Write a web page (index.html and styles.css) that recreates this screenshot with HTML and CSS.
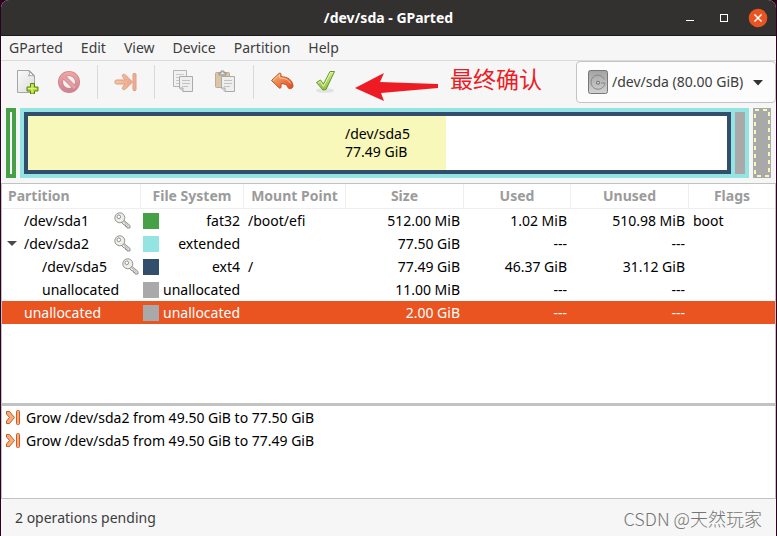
FILE: index.html
```html
<!DOCTYPE html>
<html lang="en">
<head>
  <meta charset="UTF-8">
  <meta name="viewport" content="width=device-width, initial-scale=1.0">
  <title>/dev/sda - GParted</title>
  <link rel="stylesheet" href="styles.css">
</head>
<body>
  <!-- Shared icons and gradients -->
  <svg class="defs" width="0" height="0" aria-hidden="true">
    <defs>
      <linearGradient id="paper" x1="0" y1="0" x2="1" y2="1">
        <stop offset="0" stop-color="#fafafa"/>
        <stop offset="1" stop-color="#dcdcdc"/>
      </linearGradient>
      <linearGradient id="orange" x1="0" y1="0" x2="1" y2="1">
        <stop offset="0" stop-color="#f7b878"/>
        <stop offset="1" stop-color="#e2461d"/>
      </linearGradient>
      <linearGradient id="peach" x1="0" y1="0" x2="1" y2="0">
        <stop offset="0" stop-color="#f3cba6"/>
        <stop offset="1" stop-color="#f0a28c"/>
      </linearGradient>
      <linearGradient id="rose" x1="0" y1="0" x2="0" y2="1">
        <stop offset="0" stop-color="#f0a3a3"/>
        <stop offset="1" stop-color="#cf8397"/>
      </linearGradient>
      <linearGradient id="green" x1="0" y1="0" x2="0" y2="1">
        <stop offset="0" stop-color="#d3ea86"/>
        <stop offset="1" stop-color="#8fc13e"/>
      </linearGradient>
      <linearGradient id="metal" x1="0" y1="0" x2="0" y2="1">
        <stop offset="0" stop-color="#a2a2a2"/>
        <stop offset="1" stop-color="#d2d2d2"/>
      </linearGradient>
    </defs>
    <symbol id="key" viewBox="0 0 17 17">
      <path d="M9 7.500l7 6v2.500h-3v-1.500h-1.500V13H10L7 10" fill="#e4e4e0" stroke="#92928e" stroke-linejoin="round"/>
      <circle cx="5.800" cy="5.800" r="5" fill="#ededea" stroke="#92928e"/>
      <circle cx="4.800" cy="4.800" r="1.800" fill="#fff" stroke="#92928e"/>
      <path d="M9 9l5.500 5" stroke="#b5b5b0"/>
    </symbol>
    <symbol id="grow" viewBox="0 0 16 16">
      <path d="M1.500 1.500h3L9.500 7.500l-5 6h-3v-2.500l3-3.500-3-3.500z" fill="#f2ae7c" stroke="#cf5a26" stroke-linejoin="round"/>
      <rect x="11.500" y=".500" width="3" height="14" rx="1" fill="#f2ae7c" stroke="#cf5a26"/>
    </symbol>
  </svg>

  <div class="window">
    <!-- Title bar -->
    <header class="titlebar">
      <h1>/dev/sda - GParted</h1>
      <div class="window-buttons">
        <button type="button" aria-label="Minimize"><svg width="20" height="20"><path d="M6 12.500h8" stroke="#fff"/></svg></button>
        <button type="button" aria-label="Maximize"><svg width="20" height="20"><rect x="6.500" y="6.500" width="7" height="7" fill="none" stroke="#fff"/></svg></button>
        <button type="button" aria-label="Close"><svg width="20" height="20"><circle cx="10" cy="10" r="9.300" fill="#e95420"/><path d="M6.500 6.500l7 7M13.500 6.500l-7 7" stroke="#fff" stroke-width="1.500"/></svg></button>
      </div>
    </header>

    <!-- Menu bar -->
    <nav class="menubar">
      <button type="button">GParted</button>
      <button type="button">Edit</button>
      <button type="button">View</button>
      <button type="button">Device</button>
      <button type="button">Partition</button>
      <button type="button">Help</button>
    </nav>

    <!-- Toolbar -->
    <div class="toolbar">
      <button type="button" aria-label="New">
        <svg width="24" height="24" viewBox="0 0 24 24">
          <path d="M2.500.500h12l5 5v17h-17z" fill="url(#paper)" stroke="#a5a5a5"/>
          <path d="M14 1c1 1.500.500 4-.500 5 2-.700 4-.500 5.500 0z" fill="#fff" stroke="#a5a5a5"/>
          <path d="M15.500 13.500h4v3.500h3.500v4h-3.500v3h-4v-3H12v-4h3.500z" fill="#b8dc35" stroke="#508a08"/>
          <path d="M17 14.500v8M13 18.500h8" stroke="#e2f295"/>
        </svg>
      </button>
      <button type="button" aria-label="Delete" disabled>
        <svg width="24" height="24" viewBox="0 0 24 24">
          <circle cx="12" cy="12" r="8.500" fill="#f7f2f2" stroke="#cf8585" stroke-width="5"/>
          <path d="M6 6l12 12" stroke="#cf8585" stroke-width="4.500"/>
          <circle cx="12" cy="12" r="8.500" fill="none" stroke="url(#rose)" stroke-width="3.500"/>
          <path d="M6 6l12 12" stroke="#e4a0a4" stroke-width="3"/>
        </svg>
      </button>
      <span class="separator"></span>
      <button type="button" aria-label="Resize/Move" disabled>
        <svg width="24" height="24" viewBox="0 0 24 24">
          <path d="M2 10h9L8.500 6.500c-1-2 1.500-3 3-1.500l7 7-7 7c-1.500 1.500-4 .500-3-1.500L11 14H2c-1.500 0-1.500-4 0-4z" fill="url(#peach)" stroke="#df9d7f"/>
          <rect x="19" y="3.500" width="3" height="17" rx="1" fill="#f0af94" stroke="#df9d7f"/>
        </svg>
      </button>
      <span class="separator"></span>
      <button type="button" aria-label="Copy" disabled>
        <svg width="24" height="24" viewBox="0 0 24 24">
          <path d="M2.500.500h13v16h-13z" fill="#f1f1f1" stroke="#b4b4b4"/>
          <path d="M5 4.500h8M5 7.500h6M5 10.500h4M5 13.500h3" stroke="#c8c8c8"/>
          <path d="M8.500 6.500h13v15H12l-3.500-3.500z" fill="#eee" stroke="#aaa"/>
          <path d="M11 10.500h8M11 13.500h8M11 16.500h6" stroke="#c2c2c2"/>
          <path d="M8.500 18H12v3.500" fill="#ddd" stroke="#aaa"/>
        </svg>
      </button>
      <button type="button" aria-label="Paste" disabled>
        <svg width="24" height="24" viewBox="0 0 24 24">
          <rect x="2.500" y="2.500" width="14" height="15" rx="1" fill="#dac5a9" stroke="#c2aa8c"/>
          <path d="M6 5V3h2V1h3v2h2v2z" fill="#ddd" stroke="#8f8f8f"/>
          <path d="M8.500 6.500h13v15H12l-3.500-3.500z" fill="#eee" stroke="#aaa"/>
          <path d="M11 10.500h8M11 13.500h8M11 16.500h6" stroke="#c2c2c2"/>
          <path d="M8.500 18H12v3.500" fill="#ddd" stroke="#aaa"/>
        </svg>
      </button>
      <span class="separator"></span>
      <button type="button" aria-label="Undo">
        <svg width="24" height="24" viewBox="0 0 24 24">
          <path d="M1.500 10.500L9 3.500c1-.700 2-.300 2 .700v2.500c6 0 11.500 3 12 9 0 3.500-4.500 4-5.500 1-.500-2-2.500-3-6.500-3v3c0 1.500-1 2-2 1z" fill="url(#orange)" stroke="#c35124" stroke-linejoin="round"/>
          <path d="M3 10.500l6.500-6V8c5 0 9 1.500 11 5.500" fill="none" stroke="#f9ce9e"/>
        </svg>
      </button>
      <button type="button" aria-label="Apply">
        <svg width="24" height="24" viewBox="0 0 24 24">
          <ellipse cx="13" cy="20.500" rx="9" ry="2.300" fill="#e2e2e2"/>
          <path d="M4.500 12.500l4-2.500 3 4L18 1.500h4.500L14 19.500l-3 .500z" fill="url(#green)" stroke="#64972c" stroke-linejoin="round"/>
          <path d="M6 13l2.300-1.500 3.200 5L18.500 2.500h2.500" fill="none" stroke="#e6f4b3"/>
        </svg>
      </button>
      <div class="device">
        <svg class="disk" width="20" height="24" viewBox="0 0 20 24">
          <rect x=".500" y=".500" width="19" height="23" rx="2" fill="url(#metal)" stroke="#777"/>
          <path d="M16.500 9.500A7 7 0 1 0 17 13H13" fill="none" stroke="#858585"/>
          <circle cx="10" cy="12.700" r="2" fill="#777"/>
          <circle cx="10" cy="12.700" r=".800" fill="#fff"/>
        </svg>
        <select aria-label="Device">
          <option>/dev/sda (80.00 GiB)</option>
        </select>
        <svg class="caret" width="10" height="6"><path d="M0 0h10L5 5.500z" fill="#333"/></svg>
      </div>

      <div class="note">
        <svg width="84" height="28" viewBox="0 0 84 28"><path d="M0 15L29 0l-4 9 58 2v4l-57 5 3 8z" fill="#ed1c24"/></svg>
        <span lang="zh">最终确认</span>
      </div>
    </div>

    <!-- Disk map -->
    <div class="disk-map">
      <div class="part fat32"></div>
      <div class="part extended">
        <div class="part ext4">
          <div class="used" style="width: 59.8%"></div>
          <div class="part-label">/dev/sda5<br>77.49 GiB</div>
        </div>
        <div class="free"></div>
      </div>
      <div class="part unallocated"><svg width="100%" height="100%"><rect x="2" y="2" width="14" height="66" fill="none" stroke="#f8f8ba" stroke-width="2" stroke-dasharray="4 4"/></svg></div>
    </div>

    <!-- Partition list -->
    <div class="partitions">
      <table>
        <colgroup>
          <col class="col-partition"><col class="col-fs"><col class="col-mount"><col class="col-size"><col class="col-used"><col class="col-unused"><col>
        </colgroup>
        <thead>
          <tr>
            <th class="first">Partition</th><th>File System</th><th>Mount Point</th><th>Size</th><th>Used</th><th>Unused</th><th>Flags</th>
          </tr>
        </thead>
        <tbody>
          <tr>
            <td><div class="name"><span>/dev/sda1</span><svg width="17" height="17"><use href="#key"/></svg></div></td>
            <td><div class="fs"><i class="swatch fat32"></i>fat32</div></td>
            <td>/boot/efi</td><td class="num">512.00 MiB</td><td class="num">1.02 MiB</td><td class="num">510.98 MiB</td><td>boot</td>
          </tr>
          <tr>
            <td><div class="name open"><span>/dev/sda2</span><svg width="17" height="17"><use href="#key"/></svg></div></td>
            <td><div class="fs"><i class="swatch extended"></i>extended</div></td>
            <td></td><td class="num">77.50 GiB</td><td class="num">---</td><td class="num">---</td><td></td>
          </tr>
          <tr>
            <td><div class="name child"><span>/dev/sda5</span><svg width="17" height="17"><use href="#key"/></svg></div></td>
            <td><div class="fs"><i class="swatch ext4"></i>ext4</div></td>
            <td>/</td><td class="num">77.49 GiB</td><td class="num">46.37 GiB</td><td class="num">31.12 GiB</td><td></td>
          </tr>
          <tr>
            <td><div class="name child"><span>unallocated</span></div></td>
            <td><div class="fs"><i class="swatch unallocated"></i>unallocated</div></td>
            <td></td><td class="num">11.00 MiB</td><td class="num">---</td><td class="num">---</td><td></td>
          </tr>
          <tr class="selected">
            <td><div class="name"><span>unallocated</span></div></td>
            <td><div class="fs"><i class="swatch unallocated"></i>unallocated</div></td>
            <td></td><td class="num">2.00 GiB</td><td class="num">---</td><td class="num">---</td><td></td>
          </tr>
        </tbody>
      </table>
    </div>

    <!-- Pending operations -->
    <ul class="operations">
      <li><svg width="16" height="16"><use href="#grow"/></svg>Grow /dev/sda2 from 49.50 GiB to 77.50 GiB</li>
      <li><svg width="16" height="16"><use href="#grow"/></svg>Grow /dev/sda5 from 49.50 GiB to 77.49 GiB</li>
    </ul>

    <footer class="statusbar">
      <span>2 operations pending</span>
      <span class="watermark" lang="zh">CSDN @天然玩家</span>
    </footer>
  </div>
</body>
</html>
```
FILE: styles.css
```css
* {
  box-sizing: border-box;
}
body {
  margin: 0;
  padding: 0 1px;
  background-color: #2c001e;
  font-family: "Noto Sans", "Open Sans", sans-serif;
  font-size: 14px;
  line-height: 18px;
  color: #000;
}
button, select {
  font: inherit;
  color: #3d3d3d;
  border: none;
  background: none;
  margin: 0;
  padding: 0;
}
svg {
  display: block;
  flex: none;
}
.defs {
  position: absolute;
}
.window {
  display: flex;
  flex-direction: column;
  min-height: 100vh;
  background-color: #f6f6f6;
  border-radius: 8px 8px 0 0;
  overflow: hidden;
}

/* Title bar */
.titlebar {
  display: grid;
  grid-template-columns: 1fr auto 1fr;
  align-items: center;
  height: 36px;
  background-color: #333030;
  border-bottom: 1px solid #1c1a1a;
  color: #fff;
}
.titlebar h1 {
  grid-column: 2;
  margin: 0;
  font-size: 14px;
}
.window-buttons {
  display: flex;
  justify-content: flex-end;
  gap: 14px;
  padding-right: 8px;
}

/* Menu bar */
.menubar {
  display: flex;
  gap: 2px;
  height: 25px;
  border-bottom: 1px solid #dadada;
}
.menubar button {
  padding: 0 8px;
}

/* Toolbar */
.toolbar {
  position: relative;
  display: flex;
  align-items: center;
  padding-left: 5px;
}
.toolbar button {
  display: flex;
  justify-content: center;
  width: 42px;
}
.separator {
  width: 1px;
  height: 34px;
  margin: 0 7px;
  background-color: #dadada;
}
.device {
  position: relative;
  width: 200px;
  margin-left: auto;
}
.device select {
  appearance: none;
  width: 100%;
  height: 42px;
  padding: 0 24px 0 35px;
  background-color: #fcfcfc;
  border: 1px solid #c4c4c4;
  border-radius: 4px;
}
.disk {
  position: absolute;
  left: 12px;
  top: 9px;
}
.caret {
  position: absolute;
  right: 13px;
  top: 19px;
}
.note {
  position: absolute;
  left: 354px;
  top: 5px;
  display: flex;
  align-items: flex-start;
  gap: 11px;
  color: #ed1c24;
  font-family: "Noto Sans CJK SC", sans-serif;
  font-size: 23px;
  line-height: 24px;
}
.note svg {
  margin-top: 7px;
}

/* Disk map */
.fat32 {
  background-color: #46a046;
}
.extended {
  background-color: #94e4e4;
}
.ext4 {
  background-color: #314e6c;
}
.unallocated {
  background-color: #a9a9a9;
}
.disk-map {
  display: flex;
  gap: 4px;
  height: 80px;
  padding: 5px;
}
.disk-map .fat32 {
  width: 10px;
  padding: 4px;
}
.disk-map .fat32::before {
  content: "";
  display: block;
  height: 100%;
  background-color: #fff;
}
.disk-map .extended {
  flex: 1;
  display: flex;
  gap: 4px;
  padding: 4px;
}
.disk-map .ext4 {
  flex: 1;
  display: grid;
  border: 4px solid #314e6c;
  background-color: #fff;
}
.used, .part-label {
  grid-area: 1 / 1;
}
.used {
  background-color: #f8f8ba;
}
.part-label {
  place-self: center;
}
.free {
  width: 10px;
  background-color: #a9a9a9;
}
.disk-map .unallocated {
  width: 18px;
}

/* Partition list */
.partitions {
  flex: 1;
  background-color: #fff;
  border: 1px solid #c2c2c2;
  border-bottom: 3px solid #c2c2c2;
}
table {
  width: 100%;
  border-collapse: separate;
  border-spacing: 0;
  table-layout: fixed;
}
.col-partition {
  width: 139px;
}
.col-fs {
  width: 103px;
}
.col-mount {
  width: 102px;
}
.col-size, .col-unused {
  width: 118px;
}
.col-used {
  width: 107px;
}
th {
  height: 25px;
  padding: 0;
  border-right: 1px solid #efefef;
  border-bottom: 1px solid #efefef;
  color: #9b9b9b;
  white-space: nowrap;
}
th:last-child {
  border-right: none;
}
th.first {
  padding-left: 6px;
  text-align: left;
}
td {
  height: 23px;
  padding: 0 4px;
  white-space: nowrap;
}
td:nth-child(-n+2) {
  padding: 0 4px 0 2px;
}
.num {
  text-align: right;
}
.name {
  position: relative;
  display: flex;
  align-items: center;
  padding-left: 20px;
}
.name span {
  min-width: 90px;
}
.name.child {
  padding-left: 38px;
}
.name.child span {
  min-width: 80px;
}
.name.open::before {
  content: "";
  position: absolute;
  left: 3px;
  border: 5px solid transparent;
  border-top-color: #4a4a4a;
  border-bottom: none;
}
.fs {
  display: flex;
  align-items: center;
  justify-content: space-between;
}
.swatch {
  width: 16px;
  height: 16px;
}
.selected {
  background-color: #e95420;
  color: #fff;
}

/* Pending operations */
.operations {
  min-height: 93px;
  margin: 0;
  padding: 0;
  list-style: none;
  background-color: #fff;
  border: 1px solid #c2c2c2;
  border-top: none;
}
.operations li {
  display: flex;
  align-items: center;
  gap: 5px;
  height: 23px;
  padding-left: 3px;
}

/* Status bar */
.statusbar {
  display: flex;
  align-items: center;
  justify-content: space-between;
  height: 37px;
  padding: 0 14px;
  color: #3d3d3d;
}
.watermark {
  font-family: "Noto Sans CJK SC", sans-serif;
  font-size: 18px;
  font-weight: 300;
  color: #757575;
}
```
